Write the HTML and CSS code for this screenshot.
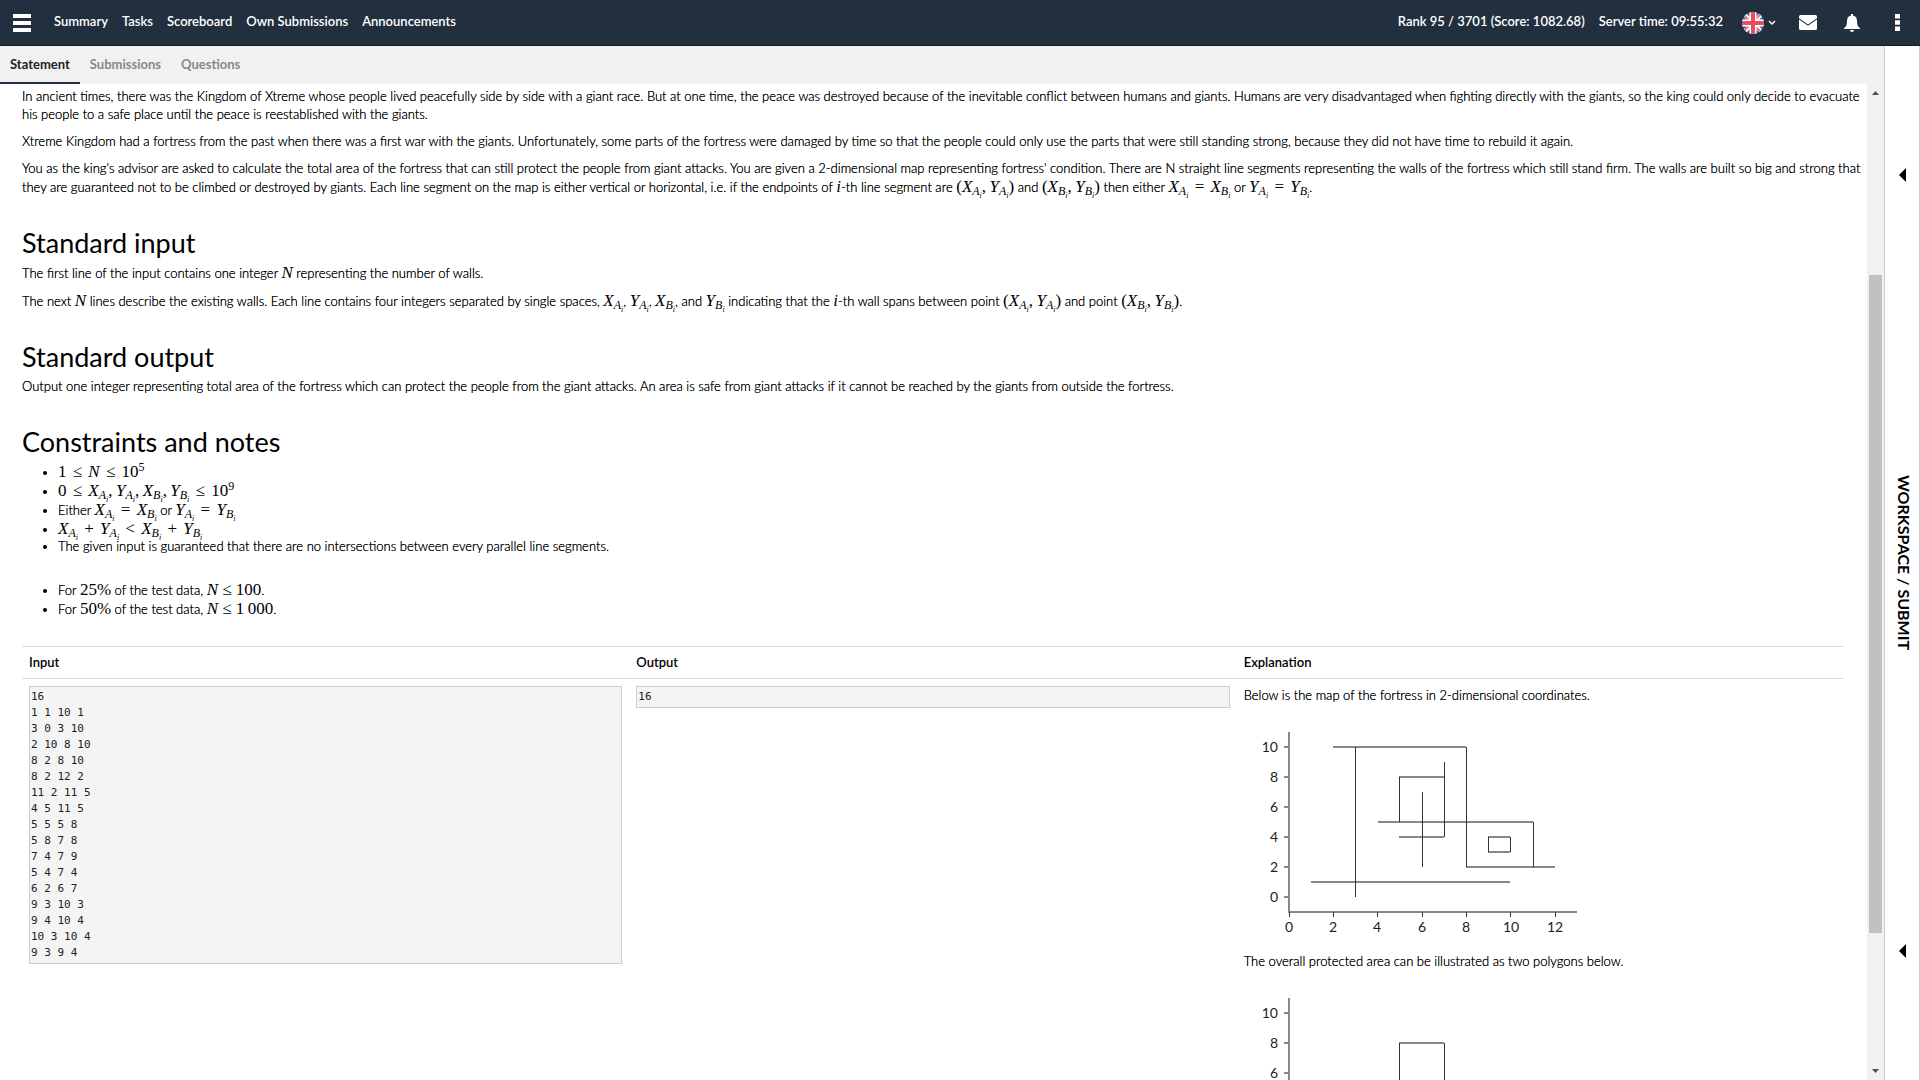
FILE: index.html
```html
<!DOCTYPE html>
<html lang="en">
<head>
<meta charset="utf-8">
<title>Statement</title>
<link rel="stylesheet" href="styles.css">
</head>
<body>
<header class="topbar">
  <button class="icon-btn menu-btn" aria-label="Menu"><svg width="18" height="18" viewBox="0 0 18 18"><path d="M0 0h18v4H0zM0 7h18v4H0zM0 14h18v4H0z"/></svg></button>
  <nav class="nav">
    <a href="#">Summary</a><a href="#">Tasks</a><a href="#">Scoreboard</a><a href="#">Own Submissions</a><a href="#">Announcements</a>
  </nav>
  <div class="status"><span>Rank 95 / 3701 (Score: 1082.68)</span><span>Server time: 09:55:32</span></div>
  <button class="icon-btn lang-btn" aria-label="Language">
    <svg width="22" height="22" viewBox="0 0 22 22"><defs><clipPath id="disc"><circle cx="11" cy="11" r="11"/></clipPath></defs><g clip-path="url(#disc)"><path fill="#3b6ba5" d="M0 0h22v22H0z"/><path stroke="#fff" stroke-width="4" d="M0 0l22 22M22 0L0 22"/><path stroke="#ed4c5c" stroke-width="1.4" d="M0 1l22 22M22-1L0 21"/><path stroke="#fff" stroke-width="7" d="M11 0v22M0 11h22"/><path stroke="#ed4c5c" stroke-width="4" d="M11 0v22M0 11h22"/></g></svg>
    <svg width="8" height="6" viewBox="0 0 8 6"><path d="M1 1l3 3 3-3" fill="none" stroke="#fff" stroke-width="1.4"/></svg>
  </button>
  <button class="icon-btn mail-btn" aria-label="Messages"><svg width="18" height="15" viewBox="0 0 18 15"><path d="M1.500 0h15Q18 0 18 1.500V3.200L9 9.500 0 3.200V1.500Q0 0 1.500 0zM0 4.500L9 10.700 18 4.500V13.500Q18 15 16.500 15H1.500Q0 15 0 13.500z"/></svg></button>
  <button class="icon-btn bell-btn" aria-label="Notifications"><svg width="16" height="18" viewBox="0 0 16 18"><path d="M7 0h2v1.500c3 .5 4 3 4 5.500 0 4 1 6 3 7v1H0v-1c2-1 3-3 3-7 0-2.500 1-5 4-5.500zM6 16h4q0 2-2 2t-2-2z"/></svg></button>
  <button class="icon-btn more-btn" aria-label="More"><svg width="5" height="17" viewBox="0 0 5 17"><path d="M0 0h5v4.500H0zM0 6.200h5v4.500H0zM0 12.500h5V17H0z"/></svg></button>
</header>
<div class="workarea">
  <main class="main">
    <nav class="tabs"><a class="active" href="#">Statement</a><a href="#">Submissions</a><a href="#">Questions</a></nav>
    <div class="viewport">
      <article class="statement">
        <p>In ancient times, there was the Kingdom of Xtreme whose people lived peacefully side by side with a giant race. But at one time, the peace was destroyed because of the inevitable conflict between humans and giants. Humans are very disadvantaged when fighting directly with the giants, so the king could only decide to evacuate his people to a safe place until the peace is reestablished with the giants.</p>
        <p>Xtreme Kingdom had a fortress from the past when there was a first war with the giants. Unfortunately, some parts of the fortress were damaged by time so that the people could only use the parts that were still standing strong, because they did not have time to rebuild it again.</p>
        <p>You as the king's advisor are asked to calculate the total area of the fortress that can still protect the people from giant attacks. You are given a 2-dimensional map representing fortress' condition. There are N straight line segments representing the walls of the fortress which still stand firm. The walls are built so big and strong that they are guaranteed not to be climbed or destroyed by giants. Each line segment on the map is either vertical or horizontal, i.e. if the endpoints of <span class="math"><i>i</i></span>-th line segment are <span class="math">(<i>X</i><sub><i>A</i><sub><i>i</i></sub></sub>,&#8201;<i>Y</i><sub><i>A</i><sub><i>i</i></sub></sub>)</span> and <span class="math">(<i>X</i><sub><i>B</i><sub><i>i</i></sub></sub>,&#8201;<i>Y</i><sub><i>B</i><sub><i>i</i></sub></sub>)</span> then either <span class="math"><i>X</i><sub><i>A</i><sub><i>i</i></sub></sub> <span class="rel">=</span> <i>X</i><sub><i>B</i><sub><i>i</i></sub></sub></span> or <span class="math"><i>Y</i><sub><i>A</i><sub><i>i</i></sub></sub> <span class="rel">=</span> <i>Y</i><sub><i>B</i><sub><i>i</i></sub></sub></span>.</p>
        <h2>Standard input</h2>
        <p>The first line of the input contains one integer <span class="math"><i>N</i></span> representing the number of walls.</p>
        <p>The next <span class="math"><i>N</i></span> lines describe the existing walls. Each line contains four integers separated by single spaces, <span class="math"><i>X</i><sub><i>A</i><sub><i>i</i></sub></sub></span>, <span class="math"><i>Y</i><sub><i>A</i><sub><i>i</i></sub></sub></span>, <span class="math"><i>X</i><sub><i>B</i><sub><i>i</i></sub></sub></span>, and <span class="math"><i>Y</i><sub><i>B</i><sub><i>i</i></sub></sub></span> indicating that the <span class="math"><i>i</i></span>-th wall spans between point <span class="math">(<i>X</i><sub><i>A</i><sub><i>i</i></sub></sub>,&#8201;<i>Y</i><sub><i>A</i><sub><i>i</i></sub></sub>)</span> and point <span class="math">(<i>X</i><sub><i>B</i><sub><i>i</i></sub></sub>,&#8201;<i>Y</i><sub><i>B</i><sub><i>i</i></sub></sub>)</span>.</p>
        <h2>Standard output</h2>
        <p>Output one integer representing total area of the fortress which can protect the people from the giant attacks. An area is safe from giant attacks if it cannot be reached by the giants from outside the fortress.</p>
        <h2>Constraints and notes</h2>
        <ul>
          <li><span class="math">1 <span class="rel">≤</span> <i>N</i> <span class="rel">≤</span> 10<sup>5</sup></span></li>
          <li><span class="math">0 <span class="rel">≤</span> <i>X</i><sub><i>A</i><sub><i>i</i></sub></sub>,&#8201;<i>Y</i><sub><i>A</i><sub><i>i</i></sub></sub>,&#8201;<i>X</i><sub><i>B</i><sub><i>i</i></sub></sub>,&#8201;<i>Y</i><sub><i>B</i><sub><i>i</i></sub></sub> <span class="rel">≤</span> 10<sup>9</sup></span></li>
          <li>Either <span class="math"><i>X</i><sub><i>A</i><sub><i>i</i></sub></sub> <span class="rel">=</span> <i>X</i><sub><i>B</i><sub><i>i</i></sub></sub></span> or <span class="math"><i>Y</i><sub><i>A</i><sub><i>i</i></sub></sub> <span class="rel">=</span> <i>Y</i><sub><i>B</i><sub><i>i</i></sub></sub></span></li>
          <li><span class="math"><i>X</i><sub><i>A</i><sub><i>i</i></sub></sub> <span class="rel">+</span> <i>Y</i><sub><i>A</i><sub><i>i</i></sub></sub> <span class="rel">&lt;</span> <i>X</i><sub><i>B</i><sub><i>i</i></sub></sub> <span class="rel">+</span> <i>Y</i><sub><i>B</i><sub><i>i</i></sub></sub></span></li>
          <li>The given input is guaranteed that there are no intersections between every parallel line segments.</li>
        </ul>
        <ul>
          <li>For <span class="math">25%</span> of the test data, <span class="math"><i>N</i> ≤ 100</span>.</li>
          <li>For <span class="math">50%</span> of the test data, <span class="math"><i>N</i> ≤ 1&#8201;000</span>.</li>
        </ul>
        <table class="samples">
          <thead><tr><th>Input</th><th>Output</th><th>Explanation</th></tr></thead>
          <tbody><tr>
            <td><pre>16
1 1 10 1
3 0 3 10
2 10 8 10
8 2 8 10
8 2 12 2
11 2 11 5
4 5 11 5
5 5 5 8
5 8 7 8
7 4 7 9
5 4 7 4
6 2 6 7
9 3 10 3
9 4 10 4
10 3 10 4
9 3 9 4</pre></td>
            <td><pre>16</pre></td>
            <td class="explanation">
              <p>Below is the map of the fortress in 2-dimensional coordinates.</p>
              <svg class="plot" width="345" height="216" viewBox="0 0 345 216">
                <g class="axis"><path d="M45 11V191H333M40 26h5M40 56h5M40 86h5M40 116h5M40 146h5M40 176h5"/><path class="tick" d="M45.500 191v5M89.500 191v5M133.500 191v5M178.500 191v5M222.500 191v5M266.500 191v5M311.500 191v5"/></g>
                <g class="ylab"><text x="34" y="31">10</text><text x="34" y="61">8</text><text x="34" y="91">6</text><text x="34" y="121">4</text><text x="34" y="151">2</text><text x="34" y="181">0</text></g>
                <g class="xlab"><text x="45" y="211">0</text><text x="89" y="211">2</text><text x="133" y="211">4</text><text x="178" y="211">6</text><text x="222" y="211">8</text><text x="267" y="211">10</text><text x="311" y="211">12</text></g>
                <path class="wide" d="M89 26H222M67 161H266M222 146H311M134 101H289M155 56H200M155 116H200M244 116H266M244 131H266"/>
                <path class="thin" d="M111.500 26V176M222.500 26V146M289.500 101V146M155.500 56V101M200.500 41V116M178.500 71V146M244.500 116V131M266.500 116V131"/>
              </svg>
              <p>The overall protected area can be illustrated as two polygons below.</p>
              <svg class="plot" width="345" height="216" viewBox="0 0 345 216">
                <g class="axis"><path d="M45 11V191H333M40 26h5M40 56h5M40 86h5M40 116h5M40 146h5M40 176h5"/></g>
                <g class="ylab"><text x="34" y="31">10</text><text x="34" y="61">8</text><text x="34" y="91">6</text></g>
                <path class="wide" d="M155 56H200"/><path class="thin" d="M155.500 56V101M200.500 56V101"/>
              </svg>
            </td>
          </tr></tbody>
        </table>
      </article>
      <div class="scrollbar" aria-hidden="true">
        <svg width="7" height="4" viewBox="0 0 7 4"><path d="M0 4L3.500 0 7 4z"/></svg>
        <div class="track"><div class="thumb"></div></div>
        <svg width="7" height="4" viewBox="0 0 7 4"><path d="M0 0L3.500 4 7 0z"/></svg>
      </div>
    </div>
  </main>
  <aside class="workspace">
    <svg width="7" height="14" viewBox="0 0 7 14"><path d="M7 0v14L0 7z"/></svg>
    <button class="workspace-btn">WORKSPACE / SUBMIT</button>
    <svg width="7" height="14" viewBox="0 0 7 14"><path d="M7 0v14L0 7z"/></svg>
  </aside>
</div>
</body>
</html>
```

FILE: styles.css
```css
* { box-sizing: border-box; }

body {
  margin: 0;
  height: 100vh;
  display: flex;
  flex-direction: column;
  overflow: hidden;
  background: #fff;
  color: #222;
  font: 13px/18px Lato, sans-serif;
}

a { color: inherit; text-decoration: none; }
svg { display: block; flex: none; }

/* top bar */
.topbar {
  flex: none;
  height: 46px;
  padding-right: 20px;
  display: flex;
  align-items: center;
  background: #222f3f;
  border-bottom: 1px solid #141c26;
  color: #fff;
  font-weight: 600;
}
.icon-btn {
  display: flex;
  align-items: center;
  padding: 0;
  border: 0;
  background: none;
  fill: #fff;
}
.menu-btn { margin: 0 23px 0 13px; }
.nav, .status { display: flex; gap: 14px; padding-bottom: 3px; }
.status { margin-left: auto; }
.lang-btn { gap: 4px; margin-left: 19px; }
.mail-btn { margin-left: 23px; }
.bell-btn { margin-left: 27px; }
.more-btn { margin-left: 35px; }

/* page body */
.workarea { flex: 1; min-height: 0; display: flex; }
.main { flex: 1; min-width: 0; display: flex; flex-direction: column; }
.tabs {
  flex: none;
  height: 38px;
  display: flex;
  background: #f1f1f1;
  color: #888;
  font-weight: bold;
  line-height: 36px;
}
.tabs a { padding: 0 10px; border-bottom: 2px solid transparent; }
.tabs .active { color: #222; border-color: #222f3f; }
.viewport { flex: 1; min-height: 0; display: flex; }
.statement {
  flex: 1;
  min-width: 0;
  overflow: hidden;
  padding: 3px 4px 0 22px;
  color: #000;
  font-weight: 300;
}

p { margin: 0 0 9px; }
p, li { text-shadow: 0 0 #000; }
h2 {
  margin: 29px 0 2px;
  font-size: 27px;
  font-weight: normal;
  line-height: 36px;
}
ul { margin: 0 0 26px; padding-left: 36px; line-height: 16px; }

.math { font: 17px/19px "Liberation Serif", serif; white-space: nowrap; text-shadow: none; }
.math sub, .math sup { font-size: 12px; line-height: 0; }
.math sub { vertical-align: -3px; }
.math sup { vertical-align: 6px; }
.math sub sub { font-size: 8px; }
.rel { margin: 0 2px; }

/* sample table */
.samples {
  width: calc(100% - 19px);
  margin-top: 28px;
  table-layout: fixed;
  border-collapse: collapse;
  border-top: 1px solid #ddd;
}
th, td { padding: 7px; text-align: left; vertical-align: top; }
th { padding: 6px 7px 7px; border-bottom: 1px solid #ddd; font-weight: 600; }
pre {
  margin: 0;
  padding: 2px 1px;
  border: 1px solid #ccc;
  background: #f4f4f4;
  color: #222;
  font: 11px/16px "DejaVu Sans Mono", monospace;
}
.plot { margin: 17px 0 15px; font-weight: 400; }
.axis, .wide { fill: none; stroke: #888; stroke-width: 2; }
.tick, .thin { fill: none; stroke: #333; stroke-width: 1; }
.plot text { font-size: 14px; fill: #222; }
.ylab { text-anchor: end; }
.xlab { text-anchor: middle; }

/* scroll bar */
.scrollbar {
  flex: none;
  width: 17px;
  padding: 7px 0;
  display: flex;
  flex-direction: column;
  align-items: center;
  background: #f1f1f1;
  fill: #505050;
}
.track { flex: 1; width: 13px; display: flex; flex-direction: column; }
.track::before { content: ""; flex: 180; }
.track::after { content: ""; flex: 136; }
.thumb { flex: 658; background: #c1c1c1; }

/* workspace panel */
.workspace {
  flex: none;
  width: 36px;
  display: grid;
  grid-template-rows: 1fr 2fr 1fr;
  place-items: center;
  border-left: 1px solid #ccc;
  border-right: 1px solid #ccc;
}
.workspace-btn {
  padding: 0 0 0 4px;
  border: 0;
  background: none;
  color: #000;
  font: bold 16px/22px Lato, sans-serif;
  writing-mode: vertical-rl;
}
```
